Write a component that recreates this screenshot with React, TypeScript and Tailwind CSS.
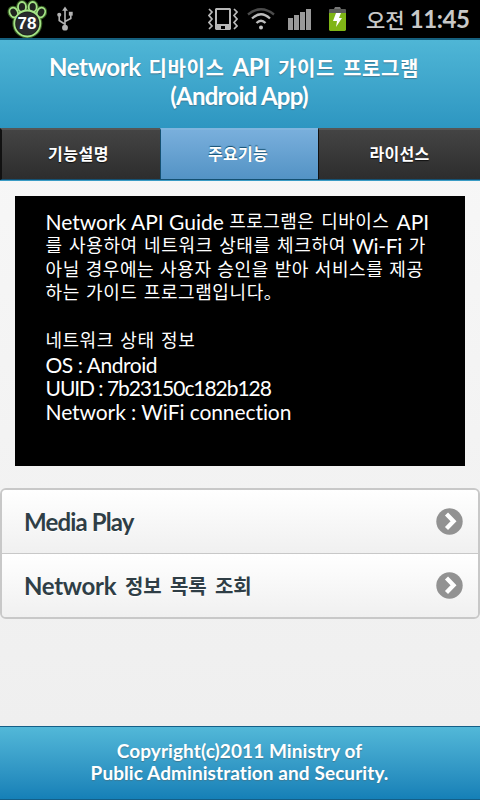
import type { ReactNode } from "react";

const font = "font-['Lato','Noto_Sans_CJK_KR',sans-serif] [font-variant-ligatures:none]";

function PawIcon() {
  return (
    <div className="relative h-[38px] w-[40px]">
      <svg viewBox="0 0 40 38" className="block h-full w-full">
        <g fill="none" stroke="#5a9a3a" strokeWidth="4" opacity="0.6">
          <ellipse cx="6.7" cy="12.5" rx="4" ry="5" transform="rotate(-25 6.7 12.5)" />
          <ellipse cx="15" cy="7" rx="4" ry="5" />
          <ellipse cx="25.7" cy="7" rx="4" ry="5" />
          <ellipse cx="34" cy="12.5" rx="4" ry="5" transform="rotate(25 34 12.5)" />
          <circle cx="20.3" cy="23.5" r="13" />
        </g>
        <g fill="#20241f" stroke="#a5e487" strokeWidth="1.8">
          <ellipse cx="6.7" cy="12.5" rx="4" ry="5" transform="rotate(-25 6.7 12.5)" />
          <ellipse cx="15" cy="7" rx="4" ry="5" />
          <ellipse cx="25.7" cy="7" rx="4" ry="5" />
          <ellipse cx="34" cy="12.5" rx="4" ry="5" transform="rotate(25 34 12.5)" />
          <circle cx="20.3" cy="23.5" r="13" />
        </g>
        <circle cx="20.3" cy="23.5" r="11" fill="#292b2d" />
      </svg>
      <span className="absolute left-0 top-[14px] w-[40px] text-center font-['Liberation_Sans',sans-serif] text-[17px] leading-[20px] font-bold text-white">78</span>
    </div>
  );
}

function UsbIcon() {
  return (
    <svg viewBox="0 0 18 27" className="h-[26px] w-[18px]" fill="#b3b3b3" stroke="#b3b3b3">
      <path d="M9 22V4M9 19L3 15V9M9 16L15 13V8" fill="none" strokeWidth="1.7" />
      <path d="M9 .5L12 5H6Z" stroke="none" />
      <circle cx="9" cy="22.5" r="3" stroke="none" />
      <circle cx="3" cy="9" r="2.1" stroke="none" />
      <path d="M13 6h4v4h-4z" stroke="none" />
    </svg>
  );
}

function VibrateIcon() {
  return (
    <svg viewBox="0 0 30 22" className="h-[22px] w-[30px]" fill="none" stroke="#b8b8b8">
      <path d="M1 1L4 4L1 7.5L4 11L1 14.5L4 18L1 21M26 1L29 4L26 7.5L29 11L26 14.5L29 18L26 21" strokeWidth="1.7" />
      <path fill="#b8b8b8" stroke="none" fillRule="evenodd" d="M8 0h14l1 1v20l-1 1H8l-1-1V1zM9 2v14h12V2zM13 18v3h4v-3z" />
    </svg>
  );
}

function WifiIcon() {
  return (
    <svg viewBox="0 0 28 22" className="h-[22px] w-[28px]" fill="none" strokeWidth="2.3">
      <path d="M1 6.5Q14-4 27 6.5" stroke="#4b4b4b" />
      <path d="M5 10.5Q14 2 23 10.5M9.5 15Q14 10.5 18.5 15" stroke="#bdbdbd" />
      <circle cx="14" cy="19.5" r="2" fill="#c5c5c5" stroke="none" />
    </svg>
  );
}

function SignalIcon() {
  return (
    <div className="flex h-[22px] w-[23px] items-end gap-[1px]">
      <i className="h-[12px] w-[5px] bg-[#999]" />
      <i className="h-[15px] w-[5px] bg-[#999]" />
      <i className="h-[18px] w-[5px] bg-[#999]" />
      <i className="h-[21px] w-[5px] bg-[#999]" />
    </div>
  );
}

function BatteryIcon() {
  return (
    <svg viewBox="0 0 17 24" className="h-[24px] w-[17px]">
      <path d="M6 0h5l1 2h-7z" fill="#777" />
      <rect y="2" width="17" height="5" rx="1" fill="#5b5d59" />
      <path d="M0 6h17v17l-1 1H1l-1-1z" fill="#7fb516" />
      <path d="M7 6h5l-2 5h3l-6 9l1-6H4z" fill="#fff" />
    </svg>
  );
}

function ArrowIcon() {
  return (
    <svg viewBox="0 0 27 27" className="h-[27px] w-[27px]">
      <circle cx="13.5" cy="13.5" r="13.2" fill="#929292" />
      <path d="M10.5 6L17.5 13.2L10.5 20.4" fill="none" stroke="#fff" strokeWidth="4.3" />
    </svg>
  );
}

function Line({ children }: { children?: ReactNode }) {
  return <p className="h-[23.75px] whitespace-pre">{children}</p>;
}

function Ko({ className, children }: { className: string; children: ReactNode }) {
  return <span className={"align-[2px] text-[18px] leading-none " + className}>{children}</span>;
}

function Row({ className, children }: { className: string; children: ReactNode }) {
  return (
    <li className={"flex items-center justify-between bg-linear-to-b from-white to-[#f0f0f0] pr-[15px] pl-[22px] " + className}>
      <span className="whitespace-pre text-[24px] leading-[28px] font-bold text-[#2f3e46] [text-shadow:0_1px_0_#fff]">{children}</span>
      <ArrowIcon />
    </li>
  );
}

export default function App() {
  return (
    <div className={"flex h-[800px] w-[480px] flex-col overflow-hidden bg-linear-to-b from-[#f9f9f9] to-[#eee] " + font}>
      <div className="flex h-[38px] items-center bg-black pl-[7px]">
        <PawIcon />
        <div className="ml-[9px]"><UsbIcon /></div>
        <div className="ml-[134px]"><VibrateIcon /></div>
        <div className="ml-[9px]"><WifiIcon /></div>
        <div className="ml-[13px]"><SignalIcon /></div>
        <div className="ml-[18px]"><BatteryIcon /></div>
        <div className="ml-[20px] flex items-baseline whitespace-pre text-[#c8c8c8]">
          <span className="text-[21px] font-medium">오전</span>
          <span className="ml-[5px] text-[24px] font-bold tracking-[-0.4px]">11:45</span>
        </div>
      </div>

      <header className="h-[90px] border-t-2 border-[#15607f] bg-linear-to-b from-[#4fb6d6] to-[#2d96c1] pt-[13px] text-center text-[24px] leading-[28px] font-bold text-white [text-shadow:0_1px_1px_#3e7a94]">
        <h1 className="pr-[12px] tracking-[-0.4px] whitespace-pre [word-spacing:2.5px]">
          Network <span className="text-[20px] tracking-[0.6px]">디바이스</span> API <span className="text-[20px] tracking-[0.6px]">가이드 프로그램</span>
        </h1>
        <div className="pr-[2px] tracking-[-0.75px]">(Android App)</div>
      </header>

      <nav className="flex h-[53px] border-b border-[#3a9cc5] text-center text-[16px] leading-[47px] font-bold text-white">
        <div className="w-[160px] border-t-2 border-b border-l-2 border-t-[#555] border-b-[#145072] border-l-[#111] bg-linear-to-b from-[#444] to-[#2d2d2d] pr-[5px] tracking-[0.5px] [text-shadow:0_1px_1px_#111]">기능설명</div>
        <div className="w-[158px] border-t-2 border-b border-l border-t-[#80b5de] border-b-[#145072] border-l-[#145072] bg-linear-to-b from-[#79afdc] to-[#5393c5] pr-[3px] tracking-[0.3px] [text-shadow:0_-1px_1px_#145072]">주요기능</div>
        <div className="w-[162px] border-t-2 border-b border-l border-t-[#555] border-b-[#145072] border-l-[#111] bg-linear-to-b from-[#444] to-[#2d2d2d] tracking-[0.3px] [text-shadow:0_1px_1px_#111]">라이선스</div>
      </nav>

      <main className="flex flex-1 flex-col">
        <section className="mx-[15px] mt-[15px] h-[270px] bg-black pt-[14px] pl-[30.5px] text-[21px] leading-[23.75px] text-white">
          <Line>Network API Guide <Ko className="tracking-[0.45px] [word-spacing:2px]">프로그램은 디바이스 </Ko>API</Line>
          <Line><Ko className="tracking-[0.65px] [word-spacing:1px]">를 사용하여 네트워크 상태를 체크하여 </Ko><span className="tracking-[-0.3px]">Wi-Fi</span><Ko className="[word-spacing:2px]"> 가</Ko></Line>
          <Line><Ko className="tracking-[0.6px] [word-spacing:0.6px]">아닐 경우에는 사용자 승인을 받아 서비스를 제공</Ko></Line>
          <Line><Ko className="tracking-[0.6px] [word-spacing:1px]">하는 가이드 프로그램입니다。</Ko></Line>
          <Line />
          <Line><Ko className="tracking-[0.5px] [word-spacing:1.5px]">네트워크 상태 정보</Ko></Line>
          <Line><span className="tracking-[-0.45px]">OS : Android</span></Line>
          <Line><span className="tracking-[-1.05px]">UUID : 7b23150c182b128</span></Line>
          <Line><span className="tracking-[-0.08px]">Network : WiFi connection</span></Line>
        </section>

        <ul className="mt-[22px] overflow-hidden rounded-[6px] border-2 border-[#c8c8c8]">
          <Row className="h-[64px] border-b border-[#c8c8c8]"><span className="tracking-[-0.85px]">Media Play</span></Row>
          <Row className="h-[63px]"><span className="tracking-[-0.3px]">Network</span><span className="align-[1px] text-[20px] tracking-[-0.2px] [word-spacing:4px]"> 정보 목록 조회</span></Row>
        </ul>
      </main>

      <footer className="h-[74px] border-t border-b border-[#145f88] bg-linear-to-b from-[#52b8d8] to-[#1580b7] pt-[13px] text-center text-[19px] leading-[22px] font-bold tracking-[0.08px] text-white [text-shadow:0_1px_1px_#3e7a94]">
        <div className="pr-[1px]">Copyright(c)2011 Ministry of</div>
        <div className="pr-[1px]">Public Administration and Security.</div>
      </footer>
    </div>
  );
}
